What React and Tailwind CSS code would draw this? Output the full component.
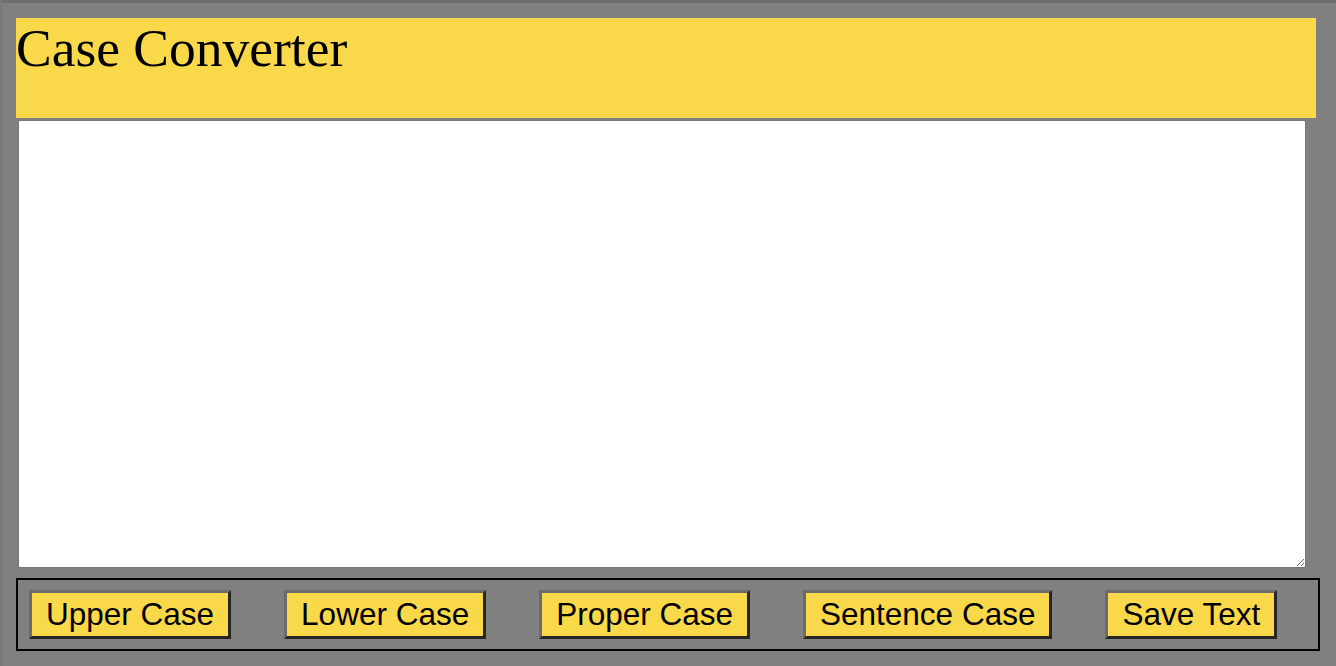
import { useState } from "react";

const BUTTONS = ["Upper Case", "Lower Case", "Proper Case", "Sentence Case", "Save Text"];

export default function App() {
  const [text, setText] = useState("");

  return (
    <div className="min-h-[666px] bg-[#808080] border-t-[3px] border-t-[#6e6e6e] border-l-[3px] border-l-[#7a7a7a] pl-[13px] pt-[15px]">
      {/* header */}
      <div className="w-[1300px] h-[100px] bg-[#f9d949]">
        <h1 className="text-[53.5px] leading-[61px] text-black font-['Liberation_Serif',serif]">
          Case Converter
        </h1>
      </div>

      {/* text area */}
      <textarea
        value={text}
        onChange={(e) => setText(e.target.value)}
        className="block ml-[2px] mt-[2px] w-[1288px] h-[448px] bg-white border border-[#767676] rounded-[2px] resize"
      />

      {/* buttons */}
      <div className="mt-[10px] w-[1304px] h-[73px] border-2 border-black flex items-center gap-[53px] pl-[11px]">
        {BUTTONS.map((label) => (
          <button
            key={label}
            className="h-[49px] px-[14px] bg-[#f9d949] border-[3px] border-t-[#6b6b6b] border-l-[#6b6b6b] border-r-[#262626] border-b-[#262626] text-[31.5px] leading-none text-black font-['Liberation_Sans',Arial,sans-serif]"
          >
            {label}
          </button>
        ))}
      </div>
    </div>
  );
}
